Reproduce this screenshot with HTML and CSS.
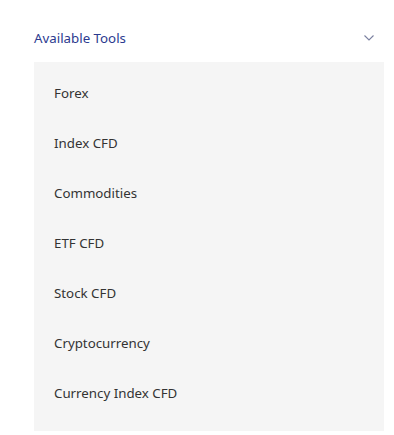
FILE: index.html
```html
<!DOCTYPE html>
<html lang="en">
<head>
  <meta charset="UTF-8">
  <meta name="viewport" content="width=device-width, initial-scale=1.0">
  <title>Available Tools</title>
  <link rel="stylesheet" href="styles.css">
</head>
<body>
  <div class="dropdown">
    <div class="dropdown-header">
      <span class="dropdown-title">Available Tools</span>
      <svg class="chevron" width="10" height="6" viewBox="0 0 10 6">
        <path d="M0.5 0.5 L5 5 L9.5 0.5" fill="none" stroke="#7a80a0" stroke-width="1.1"/>
      </svg>
    </div>
    <ul class="dropdown-list">
      <li>Forex</li>
      <li>Index CFD</li>
      <li>Commodities</li>
      <li>ETF CFD</li>
      <li>Stock CFD</li>
      <li>Cryptocurrency</li>
      <li>Currency Index CFD</li>
    </ul>
  </div>
</body>
</html>
```

FILE: styles.css
```css
body {
  margin: 0;
  background-color: #ffffff;
  font-family: "Noto Sans", "Open Sans", sans-serif;
  font-size: 13.3px;
}
.dropdown {
  margin: 14px 10px 0 34px;
}
.dropdown-header {
  display: flex;
  align-items: center;
  justify-content: space-between;
  height: 48px;
  padding-right: 10px;
}
.dropdown-title {
  color: #2b3a8f;
}
.chevron {
  display: block;
}
.dropdown-list {
  list-style: none;
  margin: 0;
  padding: 6px 0 13px;
  background-color: #f5f5f5;
}
.dropdown-list li {
  height: 50px;
  line-height: 50px;
  padding-left: 20px;
  color: #333333;
}
```
